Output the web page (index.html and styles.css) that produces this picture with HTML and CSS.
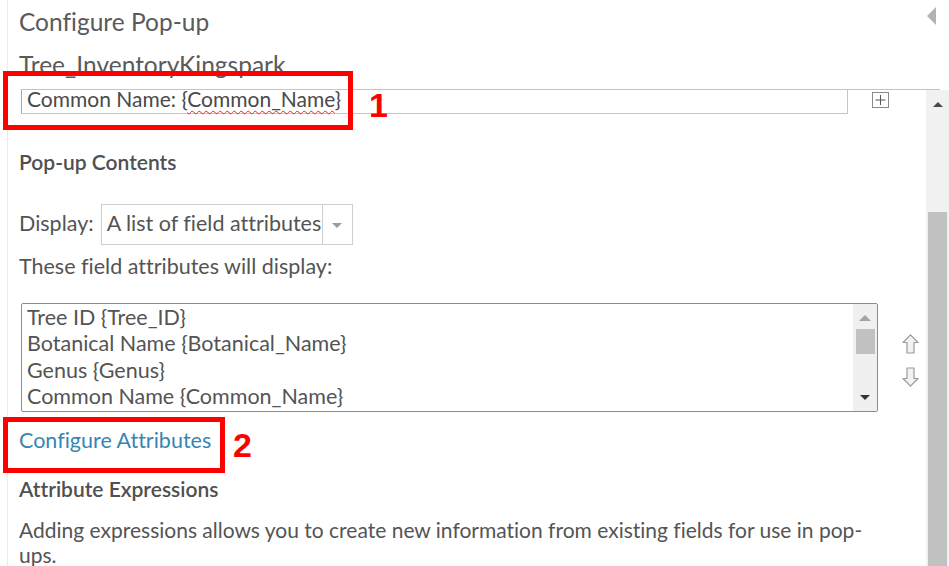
FILE: index.html
```html
<!DOCTYPE html>
<html lang="en">
<head>
<meta charset="utf-8">
<title>Configure Pop-up</title>
<link rel="stylesheet" href="styles.css">
</head>
<body>
<div class="app">
  <div class="head">
    <h1 class="title">Configure Pop-up</h1>
    <span class="collapse"></span>
  </div>
  <div class="layer">Tree_InventoryKingspark</div>
  <div class="rule"></div>
  <div class="scroller">
    <div class="content">
      <div class="title-row">
        <div class="title-input">Common Name: {<span class="spell">Common_Name</span>}</div>
        <svg class="plus" width="17" height="16" viewBox="0 0 17 16"><rect x="0.5" y="0.5" width="16" height="15" fill="#fff" stroke="#8a8a8a"/><path d="M8.5 3v10M3.5 8h10" stroke="#555" stroke-width="1" fill="none"/></svg>
      </div>
      <h2 class="section">Pop-up Contents</h2>
      <div class="display-row">
        <span class="label">Display:</span>
        <div class="select">
          <span class="select-text">A list of field attributes</span>
          <span class="select-btn"><span class="caret"></span></span>
        </div>
      </div>
      <p class="note">These field attributes will display:</p>
      <div class="fields-row">
        <div class="fields">
          <div class="items">
            <div class="item">Tree ID {Tree_ID}</div>
            <div class="item">Botanical Name {Botanical_Name}</div>
            <div class="item">Genus {Genus}</div>
            <div class="item">Common Name {Common_Name}</div>
          </div>
          <div class="mini-scroll">
            <span class="mini-up"></span>
            <span class="mini-thumb"></span>
            <span class="mini-down"></span>
          </div>
        </div>
        <div class="order">
          <svg width="17" height="20" viewBox="0 0 17 20"><path d="M8.5 0.8 L16 8.5 L12 8.5 L12 19 L5 19 L5 8.5 L1 8.5 Z" fill="#f2f2f2" stroke="#9a9a9a" stroke-width="1.2" stroke-linejoin="round"/></svg>
          <svg width="17" height="20" viewBox="0 0 17 20"><path d="M8.5 19.2 L16 11.5 L12 11.5 L12 1 L5 1 L5 11.5 L1 11.5 Z" fill="#f2f2f2" stroke="#9a9a9a" stroke-width="1.2" stroke-linejoin="round"/></svg>
        </div>
      </div>
      <a class="link" href="#">Configure Attributes</a>
      <h2 class="section expr">Attribute Expressions</h2>
      <p class="desc">Adding expressions allows you to create new information from existing fields for use in pop-ups.</p>
    </div>
    <div class="vscroll">
      <span class="v-up"></span>
      <span class="v-thumb"></span>
    </div>
  </div>
</div>
<div class="mark mark1"></div>
<span class="num num1">1</span>
<div class="mark mark2"></div>
<span class="num num2">2</span>
</body>
</html>
```
FILE: styles.css
```css
* { box-sizing: border-box; }
html, body { margin: 0; padding: 0; background: #fff; }
body {
  position: relative;
  width: 949px;
  height: 566px;
  overflow: hidden;
  font-family: "Lato", "Liberation Sans", sans-serif;
  font-variant-ligatures: no-common-ligatures;
  color: #4c4c4c;
}
.app {
  margin-left: 7px;
  border-left: 1px solid #ececec;
  height: 566px;
  display: flex;
  flex-direction: column;
}
.head {
  display: flex;
  justify-content: space-between;
  align-items: flex-start;
  padding: 7px 0 0 11px;
}
.title {
  margin: 0;
  font-size: 24.5px;
  font-weight: 400;
  line-height: 30px;
  color: #5a5a5a;
}
.collapse {
  width: 0;
  height: 0;
  border-top: 9px solid transparent;
  border-bottom: 9px solid transparent;
  border-right: 9px solid #b3b3b3;
  margin-right: 13px;
}
.layer {
  margin: 13px 0 0 11px;
  font-size: 24.5px;
  line-height: 30px;
  color: #5a5a5a;
  white-space: nowrap;
}
.rule {
  flex: none;
  margin: 9px 0 0 13px;
  width: 919px;
  height: 1px;
  background: #c4c4c4;
}
.scroller {
  flex: 1;
  min-height: 0;
  display: flex;
}
.content {
  flex: 1;
  min-width: 0;
  padding-left: 11px;
}
.vscroll {
  flex: none;
  width: 23px;
  background: #f1f1f1;
  display: flex;
  flex-direction: column;
  align-items: center;
}
.v-up {
  margin-top: 12px;
  width: 0;
  height: 0;
  border-left: 5px solid transparent;
  border-right: 5px solid transparent;
  border-bottom: 5px solid #4a4a4a;
}
.v-thumb {
  margin-top: 105px;
  width: 19px;
  flex: 1;
  background: #c1c1c1;
}
.title-row {
  display: flex;
  align-items: flex-start;
  margin-left: 2px;
}
.title-input {
  width: 827px;
  height: 24px;
  border: 1px solid #c6c6c6;
  border-top: 0;
  border-left-color: #a9a9a9;
  padding-left: 5px;
  font-size: 21px;
  line-height: 18px;
  color: #4a4a4a;
  white-space: nowrap;
}
.spell {
  text-decoration: underline wavy #e02828;
  text-decoration-thickness: 1px;
  text-decoration-skip-ink: none;
  text-underline-offset: 3px;
}
.plus {
  margin: 2px 0 0 24px;
  flex: none;
}
.section {
  margin: 35px 0 0;
  font-size: 21px;
  font-weight: 600;
  line-height: 26px;
  color: #505050;
}
.display-row {
  display: flex;
  align-items: baseline;
  gap: 7px;
  margin-top: 29px;
}
.label, .note, .item, .select-text, .desc {
  font-size: 21.5px;
  color: #545454;
}
.select {
  width: 252px;
  height: 41px;
  border: 1px solid #cfcfcf;
  display: flex;
}
.select-text {
  flex: 1;
  padding-left: 5px;
  line-height: 36px;
  white-space: nowrap;
}
.select-btn {
  width: 30px;
  border-left: 1px solid #cfcfcf;
  display: flex;
  align-items: center;
  justify-content: center;
}
.caret {
  width: 0;
  height: 0;
  margin-top: 2px;
  border-left: 5px solid transparent;
  border-right: 5px solid transparent;
  border-top: 5px solid #9a9a9a;
}
.note {
  margin: 8px 0 0;
  line-height: 27px;
}
.fields-row {
  display: flex;
  align-items: flex-start;
  margin-top: 23px;
}
.fields {
  margin-left: 2px;
  width: 857px;
  height: 109px;
  border: 1px solid #8c8c8c;
  border-radius: 2px;
  display: flex;
  overflow: hidden;
}
.items {
  flex: 1;
  padding-left: 5px;
}
.item {
  line-height: 26.3px;
  white-space: nowrap;
}
.mini-scroll {
  width: 24px;
  background: #f0f0f0;
  display: flex;
  flex-direction: column;
  align-items: center;
}
.mini-up {
  margin-top: 11px;
  width: 0;
  height: 0;
  border-left: 6px solid transparent;
  border-right: 6px solid transparent;
  border-bottom: 6px solid #a3a3a3;
}
.mini-thumb {
  margin-top: 8px;
  width: 19px;
  height: 25px;
  background: #c1c1c1;
}
.mini-down {
  margin-top: auto;
  margin-bottom: 11px;
  width: 0;
  height: 0;
  border-left: 5px solid transparent;
  border-right: 5px solid transparent;
  border-top: 5px solid #333;
}
.order {
  margin: 31px 0 0 24px;
  display: flex;
  flex-direction: column;
  gap: 13px;
}
.order svg { display: block; }
.link {
  display: block;
  width: fit-content;
  margin-top: 15px;
  font-size: 21.5px;
  line-height: 27px;
  color: #3686b3;
  text-decoration: none;
}
.section.expr { margin-top: 22px; }
.desc {
  margin: 15px 0 0;
  width: 880px;
  font-size: 21px;
  line-height: 25px;
}
.mark {
  position: absolute;
  border: 5px solid #ff0000;
}
.mark1 { left: 3px; top: 71px; width: 350px; height: 59px; }
.mark2 { left: 3px; top: 417px; width: 222px; height: 56px; }
.num {
  position: absolute;
  font-family: "Liberation Sans", sans-serif;
  font-weight: 700;
  font-size: 34px;
  line-height: 34px;
  color: #ff0000;
}
.num1 { left: 369px; top: 88px; }
.num2 { left: 233px; top: 428px; }
```
